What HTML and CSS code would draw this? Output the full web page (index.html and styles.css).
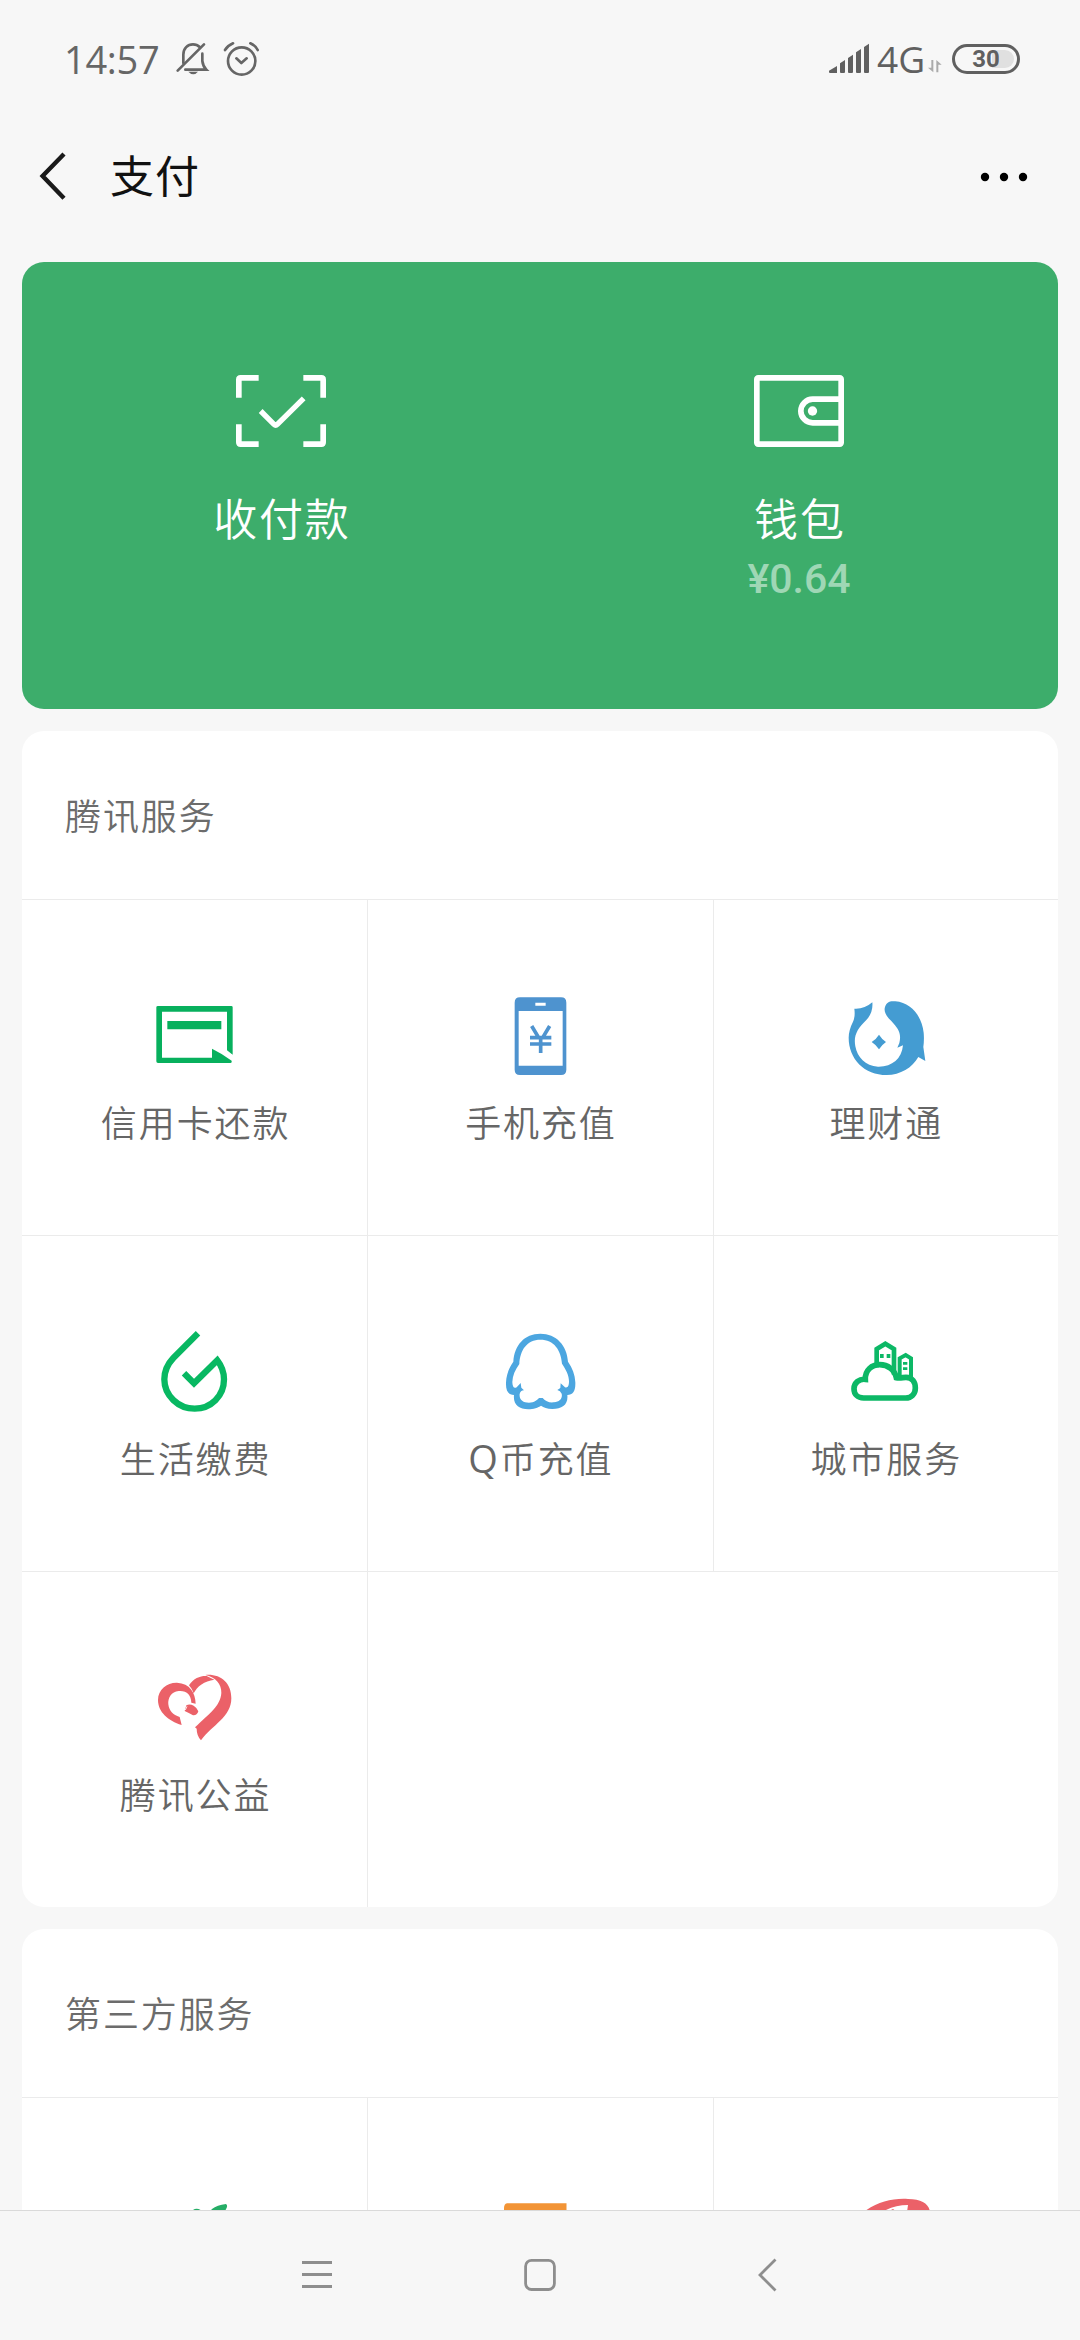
FILE: index.html
```html
<!DOCTYPE html>
<html lang="zh-CN">
<head>
<meta charset="utf-8">
<title>支付</title>
<link rel="stylesheet" href="styles.css">
</head>
<body>
<div class="screen">
  <header class="status">
    <span class="clock">14:57</span>
    <svg class="status-bell" viewBox="525 60 105 110"><g fill="none" stroke="#666" stroke-width="8" stroke-linecap="round"><path d="M550 126V101C550 82 563 70 579 70C588 70 594 73 599 78M607 98V120Q609 136 619 146H556"/><path d="M533 149L612 70"/></g><path d="M565 152H594Q580 168 565 152Z" fill="#666"/></svg>
    <svg class="status-alarm" viewBox="670 60 110 110" fill="none" stroke="#666" stroke-width="8" stroke-linecap="round" stroke-linejoin="round"><circle cx="726" cy="120" r="41"/><path d="M710 112L725 126L741 112"/><path d="M676 87Q684 74 700 67M752 67Q768 74 774 87" stroke-width="8"/></svg>
    <span class="spacer"></span>
    <svg class="status-signal" viewBox="147 66 120 93" fill="#606060"><path d="M147 149L171 135V156H150Q147 156 147 153ZM180 127L195 117V153Q195 156 192 156H183Q180 156 180 153ZM204 111L219 101V153Q219 156 216 156H207Q204 156 204 153ZM228 94L243 84V153Q243 156 240 156H231Q228 156 228 153ZM252 78L267 68V153Q267 156 264 156H255Q252 156 252 153Z"/></svg>
    <span class="network">4G</span>
    <svg class="status-data" viewBox="446 114 42 42" fill="#aaa"><path d="M456 117H462V154L446 140H456ZM471 154V117L487 131H477V154Z"/></svg>
    <span class="battery"><span class="battery-level"></span><span class="battery-text">30</span></span>
  </header>

  <nav class="titlebar">
    <svg class="back" viewBox="36 148 36 54" fill="none" stroke="#1a1a1a" stroke-width="4.4"><path d="M64 153L42.6 175L64 197.200"/></svg>
    <h1 class="title">支付</h1>
    <svg class="more" viewBox="0 0 50 12"><circle cx="6" cy="6" r="4.200"/><circle cx="25" cy="6" r="4.200"/><circle cx="44" cy="6" r="4.200"/></svg>
  </nav>

  <main class="content">
    <section class="pay">
      <div class="pay-item">
        <svg class="icon" viewBox="159 69 288 288" fill="none" stroke="#fff" stroke-width="17"><path d="M236 113.500H182Q176.500 113.500 176.500 119V173M370 113.500H424Q429.500 113.500 429.500 119V173M176.500 253V307Q176.500 312.500 182 312.500H236M429.500 253V307Q429.500 312.500 424 312.500H370"/><path d="M242 213L282 253Q287 258 292 253L371 175" stroke-width="16"/></svg>
        <span class="pay-label">收付款</span>
      </div>
      <div class="pay-item">
        <svg class="icon" viewBox="183 69 288 288" fill="none" stroke="#fff" stroke-width="17"><rect x="200.500" y="113.500" width="253" height="199" rx="4"/><path d="M453 177.500H368A35.500 35.500 0 0 0 368 248.500H453"/><circle cx="367.500" cy="213" r="14" fill="#fff" stroke="none"/></svg>
        <span class="pay-label">钱包</span>
        <span class="balance">¥0.64</span>
      </div>
    </section>

    <section class="card">
      <h2 class="card-title">腾讯服务</h2>
      <div class="grid">
        <div class="cell">
          <svg class="icon" viewBox="171 48 288 288"><path d="M204 108H424Q428 108 428 112V254L411 241V125H216V263H366V236Q395 250 425 272Q426 279 421 279H204Q199 279 199 274V112Q199 108 204 108ZM232 153H394V178H232Z" fill="#07b05d"/></svg>
          <span class="label">信用卡还款</span>
        </div>
        <div class="cell">
          <svg class="icon" viewBox="126 48 288 288"><path fill-rule="evenodd" d="M210 82H333Q349 82 349 98V299Q349 315 333 315H210Q194 315 194 299V98Q194 82 210 82ZM206 123V287H338V123ZM256 98V107H287V98Z" fill="#4e93cf"/><path d="M245 168L266 203H278L299 168M240 203H304M240 222H304M272 203V249" fill="none" stroke="#4e93cf" stroke-width="11"/></svg>
          <span class="label">手机充值</span>
        </div>
        <div class="cell">
          <svg class="icon" viewBox="81 48 288 288" fill="#449cd2"><path d="M133 116Q163 118 187 97Q190 128 169 150C142 177 130 196 136 229C142 262 166 288 204 290C246 291 275 267 279 226L262 233L268 219C275 188 265 177 244 153C227 137 221 124 225 111C229 97 239 92 256 94C303 98 335 137 341 188Q343 208 340 231L346 273L325 261C307 293 271 315 230 315C163 315 116 267 116 203Q116 181 130 153Q136 137 133 116Z"/><path d="M207 194Q215 207 228 216Q215 225 207 238Q199 225 185 216Q199 207 207 194Z"/></svg>
          <span class="label">理财通</span>
        </div>
        <div class="cell">
          <svg class="icon" viewBox="141 36 288 288" fill="none" stroke="#08b862" stroke-width="19"><path d="M294 70L220 144C202 163 193 183 193 208C193 257 235 296 284 296C333 296 372 258 372 208C372 188 366 169 352 151L282 220L252 190"/></svg>
          <span class="label">生活缴费</span>
        </div>
        <div class="cell">
          <svg class="icon" viewBox="126 36 288 288"><path fill-rule="evenodd" d="M271 71C319 71 351 106 354 155C367 174 375 194 376 217C377 244 369 255 352 255C355 284 337 297 307 297C291 297 281 292 273 287C265 292 250 298 235 298C207 298 189 284 192 255C175 255 167 243 168 218C169 194 177 173 190 155C193 106 223 71 271 71ZM271 89C231 89 210 120 208 162C195 180 188 196 187 216C187 229 192 237 200 232L212 219L214 233L222 241Q211 242 209 252C207 269 219 278 237 278C253 278 262 269 267 264H278C287 274 298 279 312 277C330 275 338 265 335 251Q331 242 322 240L331 234L332 220L345 232C354 235 357 226 357 214C357 196 348 179 336 161C333 120 312 89 271 89Z" fill="#4ca6e0"/></svg>
          <span class="label"><span class="latin">Q</span>币充值</span>
        </div>
        <div class="cell">
          <svg class="icon" viewBox="111 36 288 288" fill="none" stroke="#0cb866" stroke-width="15"><path d="M191 264C173 264 162 252 162 236C162 218 178 206 196 208C195 180 216 164 239 164C264 164 284 179 289 203C300 206 309 202 318 202C337 202 346 217 346 234C346 252 334 264 317 264Z" stroke-width="17"/><path d="M230 172V117L256 101L282 117V194" stroke-width="14"/><path d="M299 204V145L317 135L333 145V204" stroke-width="12"/><path d="M240 138H251M260 138H271" stroke-width="12"/><path d="M309 160H322M309 176H322" stroke-width="8"/></svg>
          <span class="label">城市服务</span>
        </div>
        <div class="cell">
          <svg class="icon" viewBox="141 54 288 288" fill="#eb6168"><path d="M245 255C205 243 174 216 174 180C174 148 202 127 231 128C270 130 286 158 287 191L274 188C273 164 260 151 236 153C214 155 203 174 205 193C207 212 219 225 239 231Z"/><path d="M267 136C281 114 302 107 320 108L343 119C313 123 291 139 281 160Q277 147 267 136Z"/><path d="M316 105C361 101 394 128 394 175C394 231 337 255 303 301Q290 287 290 266L285 262C327 222 362 197 364 159C365 132 347 111 316 105Z"/><path d="M259 196Q269 190 281 197Q291 203 295 214Q291 227 279 226Q267 219 254 213Z"/><path d="M261 199L256 210" stroke="#fff" stroke-width="2.500"/></svg>
          <span class="label">腾讯公益</span>
        </div>
      </div>
    </section>

    <section class="card">
      <h2 class="card-title">第三方服务</h2>
      <div class="grid">
        <div class="cell"><svg class="icon" viewBox="147 2184 96 96" fill="#25ad66"><path d="M193 2210Q197 2207 202 2211L207 2215L212 2209Q217 2205 226 2204Q229 2206 224 2212L218 2220H198Z"/></svg></div>
        <div class="cell"><svg class="icon" viewBox="492 2184 96 96" fill="#f29436"><path d="M507 2203.300H566.500V2260H504V2208Q504 2204 507 2203.300Z"/></svg></div>
        <div class="cell"><svg class="icon" viewBox="837 2184 96 96" fill="#eb6168"><path d="M865 2211C878 2202 893 2198 908 2199C922 2199 929 2204 930 2212H907L908 2205Q895 2205 884 2211L876 2222Z"/><path d="M887 2212L893 2209L897 2212Z"/></svg></div>
      </div>
    </section>
  </main>

  <footer class="navbar">
    <svg class="key" viewBox="0 0 40 40"><path d="M5 6.500H35M5 18.500H35M5 30.500H35" stroke-width="2.800"/></svg>
    <svg class="key" viewBox="0 0 40 40"><rect x="5.600" y="4.300" width="28.800" height="29.200" rx="6" stroke-width="2.800"/></svg>
    <svg class="key key-back" viewBox="0 0 40 40"><path d="M28.500 3.500L13 19L28.500 34.500" stroke-width="2.800"/></svg>
  </footer>
</div>
</body>
</html>
```
FILE: styles.css
```css
* { box-sizing: border-box; }

body {
  margin: 0;
  background: #f7f7f7;
  font-family: "Noto Sans CJK SC", sans-serif;
  font-weight: 400;
  color: #666;
}

svg { display: block; flex: none; }

.screen {
  display: flex;
  flex-direction: column;
  width: 1080px;
  height: 2340px;
  overflow: hidden;
}

.status {
  display: flex;
  flex: none;
  align-items: center;
  height: 118px;
  padding: 0 60px 0 64px;
}

.clock {
  width: 111px;
  font: 400 38px/44px "Open Sans", sans-serif;
  letter-spacing: -0.3px;
  color: #666;
}

.status-bell { width: 35px; height: 36.700px; }
.status-alarm { width: 36.700px; height: 36.700px; margin-left: 13px; }
.spacer { flex: 1; }
.status-signal { width: 40px; height: 31px; margin-bottom: 2px; }

.network {
  width: 51px;
  margin-left: 8px;
  font: 400 37px/44px "Open Sans", sans-serif;
  color: #606060;
}

.status-data { width: 14px; height: 14px; margin-top: 13px; }

.battery {
  display: grid;
  width: 68px;
  height: 30px;
  margin-left: 10px;
  padding: 3px;
  border: 3px solid #606060;
  border-radius: 15px;
}

.battery-level {
  grid-area: 1 / 1;
  justify-self: end;
  width: 22px;
  background: #e0e0e0;
  border-radius: 0 9px 9px 0;
}

.battery-text {
  grid-area: 1 / 1;
  z-index: 1;
  font: 700 24px/18px Roboto, sans-serif;
  color: #606060;
  text-align: center;
}

.titlebar {
  display: flex;
  flex: none;
  align-items: center;
  height: 116px;
  margin-bottom: 28px;
  padding: 0 51px 0 36px;
}

.back { width: 36px; height: 54px; }

.title {
  flex: 1;
  margin: -4px 0 0 38px;
  font-size: 44px;
  font-weight: 400;
  line-height: 60px;
  letter-spacing: 1px;
  color: #111;
}

.more { width: 50px; height: 12px; margin-top: 2px; }

.content {
  display: flex;
  flex: none;
  flex-direction: column;
  gap: 22px;
  height: 1948px;
  padding: 0 22px;
  overflow: hidden;
}

.pay {
  display: flex;
  flex: none;
  height: 447px;
  background: #3dad6b;
  border-radius: 22px;
}

.pay-item {
  display: flex;
  flex: 1;
  flex-direction: column;
  align-items: center;
  padding-top: 101px;
  color: #fff;
}

.icon { width: 96px; height: 96px; }

.pay-label {
  margin-top: 30px;
  padding-left: 1.800px;
  font-size: 44px;
  font-weight: 350;
  line-height: 56px;
  letter-spacing: 1.800px;
}

.balance {
  margin-top: 12px;
  font: 500 41px/44px Roboto, sans-serif;
  color: #9fd7b5;
}

.card {
  flex: none;
  background: #fff;
  border-radius: 22px;
}

.card-title {
  height: 169px;
  margin: 0 0 -1px;
  padding: 53px 43px 0;
  border-bottom: 1px solid #ebebeb;
  font-size: 36px;
  font-weight: 350;
  line-height: 60px;
  letter-spacing: 1.900px;
  color: #6c6c6c;
}

.grid {
  display: grid;
  grid-template-columns: repeat(3, 1fr);
  grid-auto-rows: 336px;
}

.cell {
  display: flex;
  flex-direction: column;
  align-items: center;
  padding-top: 87px;
  box-shadow: 1px 0 #ebebeb, 0 1px #ebebeb;
}

.cell:nth-child(3n) { box-shadow: 0 1px #ebebeb; }
.cell:nth-child(7) { box-shadow: 1px 0 #ebebeb; }

.label {
  margin-top: 14px;
  padding-left: 1.900px;
  font-size: 36px;
  font-weight: 350;
  line-height: 50px;
  letter-spacing: 1.900px;
}

.latin {
  font-family: "Open Sans", sans-serif;
  font-size: 38px;
  font-weight: 400;
  line-height: 1;
}

.navbar {
  display: flex;
  flex: none;
  align-items: center;
  gap: 183px;
  height: 130px;
  padding-left: 297px;
  border-top: 1px solid #dadada;
}

.key {
  width: 40px;
  height: 40px;
  fill: none;
  stroke: #8e8e8e;
}

.key-back { margin-left: 4px; }
```
